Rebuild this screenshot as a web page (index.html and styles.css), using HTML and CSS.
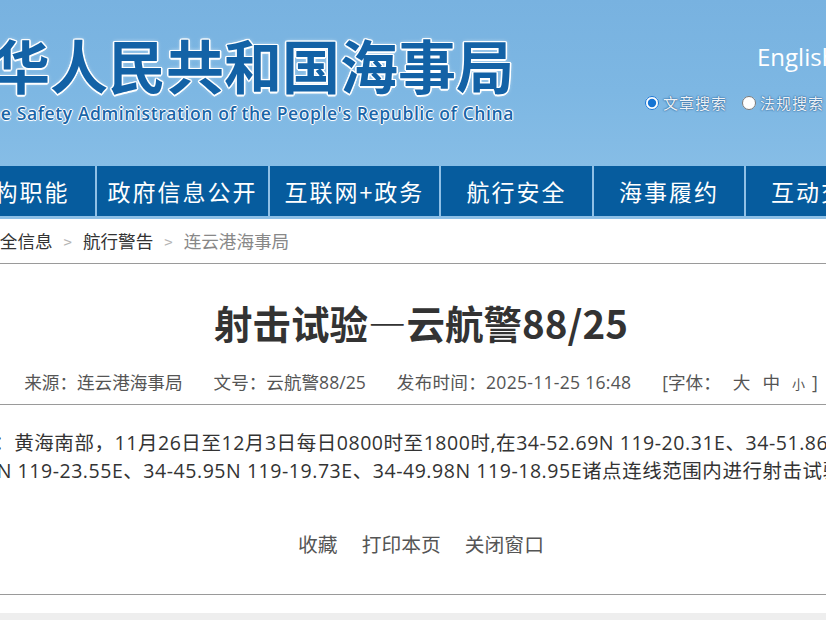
FILE: index.html
```html
<!DOCTYPE html>
<html lang="zh-CN">
<head>
<meta charset="utf-8">
<title>射击试验—云航警88/25</title>
<link rel="stylesheet" href="styles.css">
</head>
<body>
<div class="page">
  <header class="top">
    <div class="logo">
      <div class="logo-cn">中华人民共和国海事局</div>
      <div class="logo-en">Maritime Safety Administration of the People's Republic of China</div>
    </div>
    <div class="tools">
      <div class="lang">English</div>
      <div class="search">
        <label class="opt"><input type="radio" name="stype" checked>文章搜索</label>
        <label class="opt"><input type="radio" name="stype">法规搜索</label>
      </div>
    </div>
  </header>
  <nav class="nav">
    <ul>
      <li>机构职能</li>
      <li>政府信息公开</li>
      <li>互联网+政务</li>
      <li>航行安全</li>
      <li>海事履约</li>
      <li>互动交流</li>
    </ul>
  </nav>
  <div class="crumb">
    <span class="crumb-item">航行安全信息</span><span class="sep">&gt;</span><span class="crumb-item">航行警告</span><span class="sep">&gt;</span><span class="crumb-cur">连云港海事局</span>
  </div>
  <article class="article">
    <h1 class="title">射击试验—云航警88/25</h1>
    <div class="meta">
      <span>来源：连云港海事局</span>
      <span>文号：云航警88/25</span>
      <span class="date">发布时间：2025-11-25 16:48</span>
      <span class="fontsize">[字体：<a class="fs">大</a><a class="fs">中</a><a class="fs small">小</a><span class="br">]</span></span>
    </div>
    <div class="content">
      <p>射击试验：黄海南部，11月26日至12月3日每日0800时至1800时,在34-52.69N 119-20.31E、34-51.86N 119-24.80E、<br>34-47.63N 119-23.55E、34-45.95N 119-19.73E、34-49.98N 119-18.95E诸点连线范围内进行射击试验，禁止驶入。</p>
    </div>
    <div class="actions">
      <a class="act">收藏</a>
      <a class="act">打印本页</a>
      <a class="act">关闭窗口</a>
    </div>
  </article>
  <footer class="foot"></footer>
</div>
</body>
</html>
```
FILE: styles.css
```css
html {
  overflow: hidden;
}
body {
  margin: 0;
  background: #fff;
  color: #333;
  font-family: "Open Sans", "Noto Sans CJK SC", sans-serif;
}
.page {
  width: 992px;
  margin-left: -75px;
}

/* header */
.top {
  height: 166px;
  display: flex;
  background: linear-gradient(180deg, #78b2e0 0%, #7db7e3 55%, #86bde6 100%);
}
.logo {
  width: 589px;
  text-align: right;
  padding-top: 28px;
  white-space: nowrap;
}
.logo-cn {
  font-family: "Noto Sans CJK SC", sans-serif;
  font-weight: 700;
  font-size: 58px;
  line-height: 72px;
  color: #1362a6;
  text-shadow: 1.5px 0 #fff, -1.5px 0 #fff, 0 1.5px #fff, 0 -1.5px #fff,
    1px 1px #fff, -1px -1px #fff, 1px -1px #fff, -1px 1px #fff, 0 0 4px rgba(255,255,255,0.8);
}
.logo-en {
  margin-top: 2px;
  font-family: "Open Sans", sans-serif;
  font-weight: 600;
  font-size: 17.5px;
  letter-spacing: 0.6px;
  line-height: 22px;
  color: #1a65a8;
  text-shadow: 1px 0 #fff, -1px 0 #fff, 0 1px #fff, 0 -1px #fff, 0 0 3px rgba(255,255,255,0.8);
}
.tools {
  margin-left: 131px;
  padding-top: 42px;
}
.lang {
  padding-left: 112px;
  font-family: "Open Sans", sans-serif;
  font-size: 24px;
  line-height: 30px;
  color: #fff;
}
.search {
  margin-top: 21px;
  display: flex;
  gap: 15px;
  white-space: nowrap;
}
.opt {
  display: flex;
  align-items: center;
  font-family: "Noto Sans CJK SC", sans-serif;
  font-size: 15px;
  line-height: 20px;
  letter-spacing: 1px;
  color: #eef3f8;
  text-shadow: 0 0 2px #245b90, 0 0 1px #245b90;
}
.opt input {
  margin: 0 4px 0 0;
  width: 14px;
  height: 14px;
  accent-color: #1574d4;
}

/* nav */
.nav {
  background: #065c9e;
  border-bottom: 3px solid #8cbfe6;
}
.nav ul {
  display: flex;
  margin: 0;
  padding: 0 0 0 19px;
  list-style: none;
  height: 50px;
}
.nav li {
  flex: none;
  box-sizing: border-box;
  border-right: 2px solid #8fc0e6;
  font-family: "Noto Sans CJK SC", sans-serif;
  font-size: 23px;
  line-height: 50px;
  letter-spacing: 2px;
  color: #fff;
  text-align: center;
  white-space: nowrap;
}
.nav li:nth-child(1) { width: 153px; }
.nav li:nth-child(2) { width: 173px; }
.nav li:nth-child(3) { width: 171px; }
.nav li:nth-child(4) { width: 153px; }
.nav li:nth-child(5) { width: 152px; }
.nav li:nth-child(6) { width: 152px; }

/* breadcrumb */
.crumb {
  height: 44px;
  line-height: 44px;
  padding-left: 22px;
  border-bottom: 1px solid #9a9a9a;
  font-family: "Noto Sans CJK SC", sans-serif;
  font-size: 17.6px;
  white-space: nowrap;
}
.crumb-item { color: #333; }
.crumb-cur { color: #888; }
.sep {
  margin: 0 11px;
  color: #b5b5b5;
  font-size: 15px;
}

/* article */
.article {
  text-align: center;
}
.title {
  margin: 0;
  padding-top: 33px;
  font-family: "Noto Sans CJK SC", sans-serif;
  font-size: 38.5px;
  line-height: 50px;
  font-weight: 700;
  color: #333;
}
.meta {
  margin-top: 23px;
  padding-bottom: 8px;
  border-bottom: 1px solid #9a9a9a;
  display: flex;
  justify-content: center;
  gap: 31px;
  font-size: 17.6px;
  line-height: 24px;
  color: #555;
  white-space: nowrap;
}
.date {
  letter-spacing: 0.25px;
}
.fs {
  margin-left: 12px;
}
.fs.small {
  font-size: 13px;
}
.br {
  margin-left: 7px;
}
.content p {
  margin: 24px 0 0 -11px;
  text-align: left;
  white-space: nowrap;
  font-size: 19.5px;
  letter-spacing: 0.55px;
  line-height: 28px;
  color: #333;
}
.actions {
  margin-top: 47px;
  padding-bottom: 38px;
  border-bottom: 1px solid #9a9a9a;
  display: flex;
  justify-content: center;
  gap: 24px;
  font-family: "Noto Sans CJK SC", sans-serif;
  font-size: 19.8px;
  line-height: 24px;
  color: #555;
}
.foot {
  margin-top: 18px;
  height: 60px;
  background: #eee;
}
```
